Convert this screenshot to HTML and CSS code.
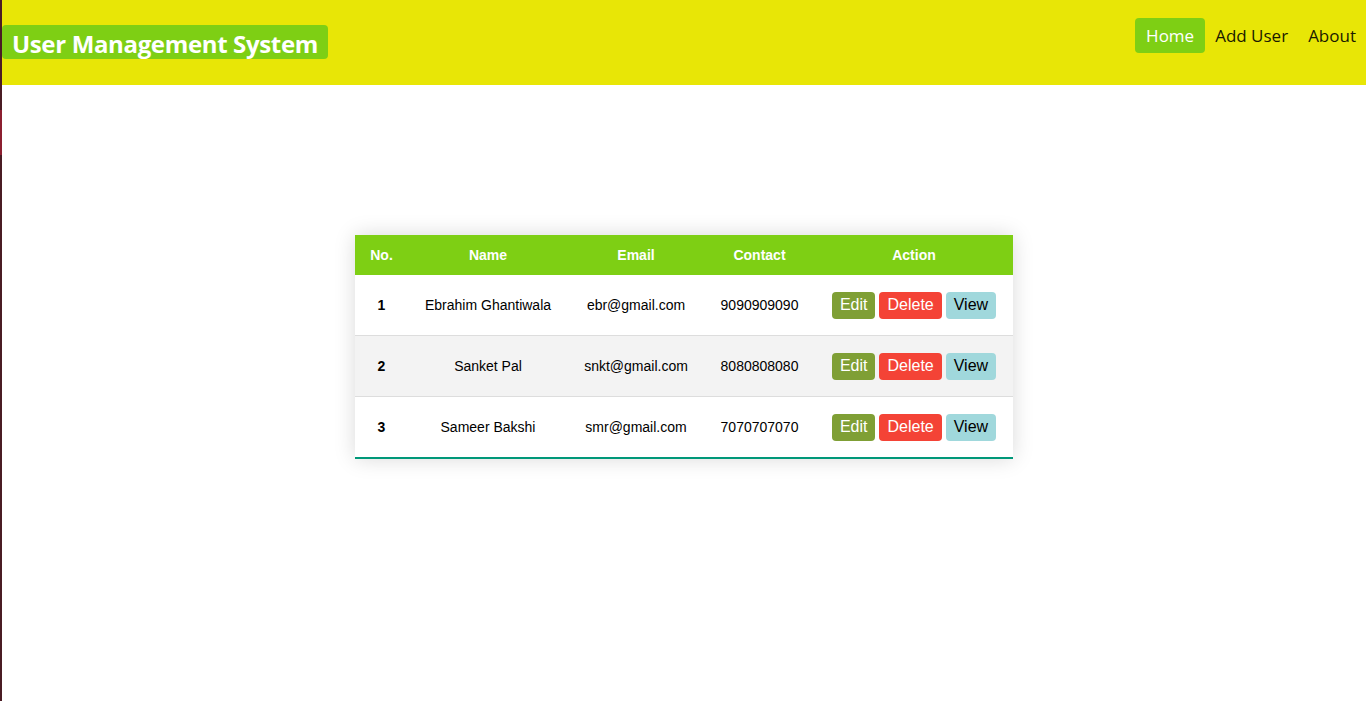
FILE: index.html
```html
<!DOCTYPE html>
<html>
<head>
<meta charset="utf-8">
<link rel="stylesheet" href="styles.css">
<title>User Management System</title>
</head>
<body>
<div class="page">
  <header class="topbar">
    <h1 class="brand">User Management System</h1>
    <nav class="nav">
      <a class="nav-link active" href="#">Home</a>
      <a class="nav-link" href="#">Add User</a>
      <a class="nav-link" href="#">About</a>
    </nav>
  </header>
  <main class="content">
    <table class="styled-table">
      <colgroup>
        <col class="c-no"><col class="c-name"><col class="c-email"><col class="c-contact"><col class="c-action">
      </colgroup>
      <thead>
        <tr><th>No.</th><th>Name</th><th>Email</th><th>Contact</th><th>Action</th></tr>
      </thead>
      <tbody>
        <tr>
          <th scope="row">1</th><td>Ebrahim Ghantiwala</td><td>ebr@gmail.com</td><td>9090909090</td>
          <td class="actions"><button class="btn btn-edit">Edit</button><button class="btn btn-delete">Delete</button><button class="btn btn-view">View</button></td>
        </tr>
        <tr>
          <th scope="row">2</th><td>Sanket Pal</td><td>snkt@gmail.com</td><td>8080808080</td>
          <td class="actions"><button class="btn btn-edit">Edit</button><button class="btn btn-delete">Delete</button><button class="btn btn-view">View</button></td>
        </tr>
        <tr>
          <th scope="row">3</th><td>Sameer Bakshi</td><td>smr@gmail.com</td><td>7070707070</td>
          <td class="actions"><button class="btn btn-edit">Edit</button><button class="btn btn-delete">Delete</button><button class="btn btn-view">View</button></td>
        </tr>
      </tbody>
    </table>
  </main>
</div>
</body>
</html>
```
FILE: styles.css
```css
html, body {
  margin: 0;
  padding: 0;
  height: 100%;
}
body {
  background:
    linear-gradient(to bottom, #4a1c24 0, #4a1c24 110px, #8c1f30 110px, #8c1f30 155px, #4a1c24 155px) left top / 2px 100% no-repeat,
    #ffffff;
  font-family: "Liberation Sans", Arial, sans-serif;
}
.page {
  margin-left: 2px;
  min-height: 100%;
}
.topbar {
  height: 85px;
  background: #e8e606;
  display: flex;
  justify-content: space-between;
  align-items: flex-start;
}
.brand {
  margin: 25px 0 0 0;
  height: 32px;
  padding: 2px 10px 0 10px;
  line-height: 34px;
  background: #7ecf14;
  border-radius: 4px;
  color: #fff;
  font-family: "Open Sans", "Noto Sans", sans-serif;
  font-weight: 700;
  font-size: 24px;
  letter-spacing: -0.35px;
  white-space: nowrap;
}
.nav {
  display: flex;
  margin-top: 18px;
}
.nav-link {
  display: block;
  height: 35px;
  line-height: 35px;
  padding: 0 10px;
  color: #1a1a00;
  text-decoration: none;
  font-family: "Open Sans", "Noto Sans", sans-serif;
  font-size: 17px;
  border-radius: 4px;
  white-space: nowrap;
}
.nav-link.active {
  background: #7ecf14;
  color: #fff;
  padding: 0 11px;
}
.content {
  padding-top: 150px;
  display: flex;
  justify-content: center;
}
.styled-table {
  border-collapse: collapse;
  width: 658px;
  table-layout: fixed;
  font-size: 14px;
  box-shadow: 0 0 20px rgba(0, 0, 0, 0.15);
}
.c-no { width: 53px; }
.c-name { width: 160px; }
.c-email { width: 136px; }
.c-contact { width: 111px; }
.c-action { width: 198px; }
.styled-table thead tr {
  background: #7ecf14;
  color: #fff;
}
.styled-table thead th {
  height: 40px;
  padding: 0;
  font-weight: 700;
  text-align: center;
}
.styled-table tbody th,
.styled-table tbody td {
  height: 60px;
  padding: 0;
  text-align: center;
  color: #000;
}
.styled-table tbody tr {
  border-bottom: 1px solid #dddddd;
}
.styled-table tbody tr:nth-of-type(even) {
  background: #f3f3f3;
}
.styled-table tbody tr:last-of-type {
  border-bottom: 2px solid #009879;
}
.actions {
  white-space: nowrap;
}
.btn {
  font-family: "Liberation Sans", Arial, sans-serif;
  font-size: 16px;
  height: 27px;
  padding: 0 8px;
  border: none;
  border-radius: 4px;
  margin: 0 2px;
  vertical-align: middle;
  cursor: pointer;
}
.btn-edit { background: #7f9f35; color: #fff; }
.btn-delete { background: #f44336; color: #fff; }
.btn-view { background: #a0d8dc; color: #000; }
```
